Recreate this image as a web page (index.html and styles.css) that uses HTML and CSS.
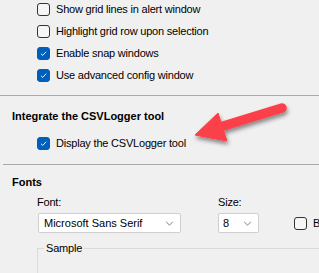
FILE: index.html
```html
<!DOCTYPE html>
<html lang="en">
<head>
    <meta charset="UTF-8">
    <title>Options</title>
    <link rel="stylesheet" href="styles.css">
</head>
<body>
    <div class="panel">
        <div class="opts">
            <div class="row"><span class="box"></span>Show grid lines in alert window</div>
            <div class="row"><span class="box"></span>Highlight grid row upon selection</div>
            <div class="row"><span class="box checked"><svg viewBox="0 0 13 13"><path d="M3.5 6.8 L5.6 8.8 L9.6 4.4"/></svg></span>Enable snap windows</div>
            <div class="row"><span class="box checked"><svg viewBox="0 0 13 13"><path d="M3.5 6.8 L5.6 8.8 L9.6 4.4"/></svg></span>Use advanced config window</div>
        </div>

        <hr class="sep">

        <h3 class="title">Integrate the CSVLogger tool</h3>
        <div class="row logger"><span class="box checked"><svg viewBox="0 0 13 13"><path d="M3.5 6.8 L5.6 8.8 L9.6 4.4"/></svg></span>Display the CSVLogger tool</div>

        <hr class="sep inset">

        <h3 class="title fonts">Fonts</h3>
        <div class="font-line">
            <div class="field">
                <span class="lbl">Font:</span>
                <div class="combo wide"><span>Microsoft Sans Serif</span><svg class="chev" viewBox="0 0 10 6"><path d="M1 1 L5 5 L9 1"/></svg></div>
            </div>
            <div class="field">
                <span class="lbl">Size:</span>
                <div class="combo small"><span>8</span><svg class="chev" viewBox="0 0 10 6"><path d="M1 1 L5 5 L9 1"/></svg></div>
            </div>
            <div class="row bold-opt"><span class="box"></span>Bold</div>
        </div>

        <fieldset class="sample">
            <legend>Sample</legend>
        </fieldset>

        <svg class="arrow" width="319" height="273" viewBox="0 0 319 273">
            <defs>
                <filter id="shadow" x="-20%" y="-40%" width="140%" height="180%">
                    <feDropShadow dx="1" dy="3" stdDeviation="2" flood-color="#000" flood-opacity="0.45"/>
                </filter>
            </defs>
            <g filter="url(#shadow)" fill="#fb4048" stroke="#fb4048">
                <line x1="282" y1="108" x2="220" y2="127" stroke-width="9.5" stroke-linecap="round"/>
                <polygon points="195,135 218,113 227,141" stroke-width="1" stroke-linejoin="round"/>
            </g>
        </svg>
    </div>
</body>
</html>
```

FILE: styles.css
```css
body {
    margin: 0;
    background-color: #f0f0f0;
    font-family: "Liberation Sans", Arial, sans-serif;
    font-size: 11px;
    letter-spacing: -0.2px;
    color: #000;
    overflow: hidden;
}

.panel {
    position: relative;
    width: 319px;
    height: 273px;
    overflow: hidden;
}

.opts {
    margin-top: -2px;
    padding-left: 37px;
}

.row {
    display: flex;
    align-items: center;
    height: 22px;
    white-space: nowrap;
}

.box {
    display: inline-flex;
    box-sizing: border-box;
    width: 13px;
    height: 13px;
    margin-right: 6px;
    border: 1px solid #333;
    border-radius: 3px;
    background-color: #f6f6f6;
}

.box.checked {
    background-color: #005fb8;
    border-color: #005fb8;
}

.box svg {
    width: 11px;
    height: 11px;
}

.box svg path {
    fill: none;
    stroke: #fff;
    stroke-width: 1.1;
}

.sep {
    margin: 9px 0 0 0;
    border: none;
    border-top: 1px solid #a9a9a9;
    height: 0;
}

.sep.inset {
    margin: 10px 0 0 3px;
}

.title {
    margin: 12px 0 0 12px;
    font-size: 11px;
    line-height: 16px;
    font-weight: bold;
    letter-spacing: 0;
}

.title.fonts {
    margin-top: 9px;
}

.logger {
    margin-top: 8px;
    padding-left: 37px;
}

.font-line {
    display: flex;
    align-items: flex-end;
    margin-top: 4px;
    padding-left: 37px;
}

.field {
    display: flex;
    flex-direction: column;
}

.lbl {
    line-height: 16px;
    margin-bottom: 3px;
}

.combo {
    display: flex;
    align-items: center;
    justify-content: space-between;
    box-sizing: border-box;
    height: 20px;
    padding: 0 6px 0 5px;
    background-color: #fff;
    border: 1px solid #cfcfcf;
    border-radius: 2px;
    font-size: 11px;
    letter-spacing: 0;
}

.combo.wide {
    width: 143px;
    margin-left: 1px;
}

.combo.small {
    width: 41px;
    padding-left: 4px;
}

.field + .field {
    margin-left: 37px;
}

.chev {
    width: 9px;
    height: 5px;
}

.chev path {
    fill: none;
    stroke: #666;
    stroke-width: 1;
}

.bold-opt {
    margin-left: 35px;
    height: 20px;
    padding-top: 3px;
}

.sample {
    margin: 7px 0 0 37px;
    padding: 0;
    width: 400px;
    height: 60px;
    border: 1px solid #dadada;
    border-radius: 0;
}

.sample legend {
    margin-left: 6px;
    padding: 0 2px;
    line-height: 16px;
}

.arrow {
    position: absolute;
    left: 0;
    top: 0;
    pointer-events: none;
}
```
